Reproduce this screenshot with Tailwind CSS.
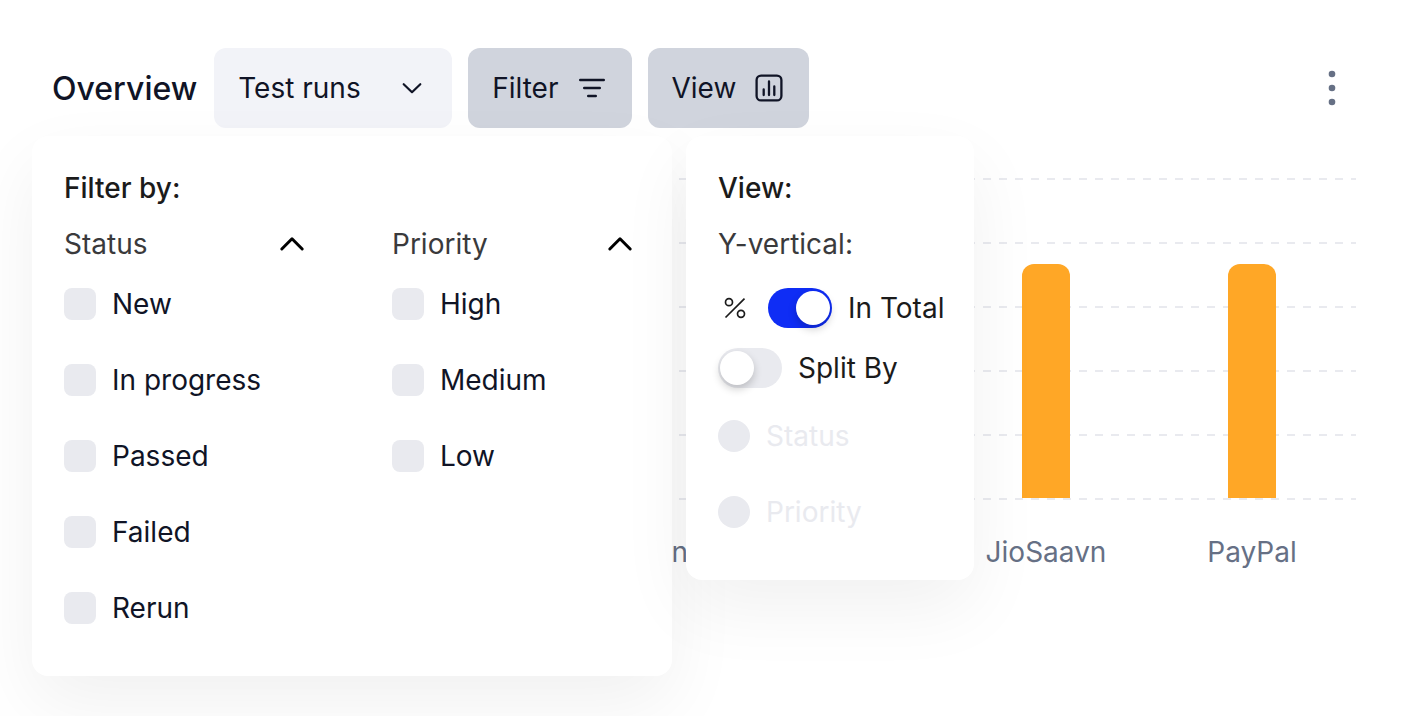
<!DOCTYPE html>
<html lang="en">
<head>
<meta charset="utf-8">
<meta name="viewport" content="width=device-width, initial-scale=1">
<title>Overview</title>
<script src="https://cdn.jsdelivr.net/npm/@tailwindcss/browser@4"></script>
</head>
<body class="min-h-screen overflow-x-hidden bg-white font-['Inter',sans-serif] text-[28px] leading-8 text-[#101426]">
<header class="flex items-center gap-4 pt-12 pl-[52px] pr-14">
  <h1 class="mr-px pt-0.5 text-[32px] leading-10 font-medium">Overview</h1>
  <div class="relative">
    <select aria-label="Metric" class="h-20 w-[238px] appearance-none rounded-xl bg-[#f2f3f8] pl-6 pr-16">
      <option>Test runs</option>
    </select>
    <svg class="pointer-events-none absolute right-6 top-6 size-8" viewBox="0 0 32 32" fill="none" stroke="#101426" stroke-width="2.2" stroke-linecap="round" stroke-linejoin="round" aria-hidden="true"><path d="M7.700 12.200l8.300 8 8.300-8"/></svg>
  </div>
  <button type="button" class="flex h-20 items-center gap-[17px] rounded-xl bg-[#d0d4dd] px-6">Filter
    <svg class="size-8" viewBox="0 0 32 32" fill="none" stroke="#101426" stroke-width="2.400" stroke-linecap="round" aria-hidden="true"><path d="M4.200 8h23.600M8.200 16h15.600M12.200 24h7.600"/></svg>
  </button>
  <button type="button" class="flex h-20 items-center gap-[17px] rounded-xl bg-[#d0d4dd] px-6">View
    <svg class="size-8" viewBox="0 0 32 32" fill="none" stroke="#101426" stroke-width="2.300" stroke-linecap="round" aria-hidden="true"><rect x="3.600" y="3.600" width="24.800" height="24.800" rx="4.500"/><path d="M10.700 17.500v5.500M16 9.500V23M21.300 14.500V23"/></svg>
  </button>
  <button type="button" aria-label="More options" class="ml-auto">
    <svg class="w-8 h-10" viewBox="0 0 32 40" fill="#667085" aria-hidden="true"><circle cx="16" cy="6" r="3.300"/><circle cx="16" cy="20" r="3.300"/><circle cx="16" cy="34" r="3.300"/></svg>
  </button>
</header>

<main class="relative pt-[50px]">
  <section aria-label="Test runs by project" class="pl-[119px] pr-12">
    <div class="grid">
      <div class="col-start-1 row-start-1 flex flex-col gap-[62px]" aria-hidden="true">
        <div class="h-0.5 bg-[repeating-linear-gradient(90deg,#e9eaef_0_8px,transparent_8px_16px)]"></div>
        <div class="h-0.5 bg-[repeating-linear-gradient(90deg,#e9eaef_0_8px,transparent_8px_16px)]"></div>
        <div class="h-0.5 bg-[repeating-linear-gradient(90deg,#e9eaef_0_8px,transparent_8px_16px)]"></div>
        <div class="h-0.5 bg-[repeating-linear-gradient(90deg,#e9eaef_0_8px,transparent_8px_16px)]"></div>
        <div class="h-0.5 bg-[repeating-linear-gradient(90deg,#e9eaef_0_8px,transparent_8px_16px)]"></div>
        <div class="h-0.5 bg-[repeating-linear-gradient(90deg,#e9eaef_0_8px,transparent_8px_16px)]"></div>
      </div>
      <div class="z-10 col-start-1 row-start-1 grid grid-cols-6 items-end justify-items-center pr-px pb-0.5">
        <div class="col-start-5 h-[234px] w-12 rounded-t-xl bg-[#ffa726]"></div>
        <div class="h-[234px] w-12 rounded-t-xl bg-[#ffa726]"></div>
      </div>
    </div>
    <div class="grid grid-cols-6 pt-9 pr-px text-center text-[#667085]">
      <span class="col-start-3">Amazon</span>
      <span class="col-start-5">JioSaavn</span>
      <span>PayPal</span>
    </div>
  </section>

  <!-- Open menus, floating over the chart -->
  <div class="absolute left-8 top-2 z-20 flex items-start gap-3.5">
    <form class="w-[640px] rounded-2xl bg-white pt-8 pb-[52px] pl-8 pr-9 shadow-[0_28px_72px_rgba(0,0,0,0.06)]">
      <h2 class="leading-10 font-medium text-[#1b1b1b]">Filter by:</h2>
      <div class="mt-4 grid grid-cols-2 items-start gap-x-[84px]">
        <div class="flex flex-col gap-11">
          <button type="button" aria-expanded="true" class="-mb-5 flex h-10 items-center justify-between text-[#3a3a3c]">Status
            <svg class="size-8" viewBox="0 0 32 32" fill="none" stroke="#000" stroke-width="3" stroke-linecap="round" stroke-linejoin="round" aria-hidden="true"><path d="M5.800 21L16 10.800 26.200 21"/></svg>
          </button>
          <label class="flex h-8 items-center gap-4"><input type="checkbox" class="size-8 appearance-none rounded-lg bg-[#e9eaef] checked:bg-[#0f2df5]">New</label>
          <label class="flex h-8 items-center gap-4"><input type="checkbox" class="size-8 appearance-none rounded-lg bg-[#e9eaef] checked:bg-[#0f2df5]">In progress</label>
          <label class="flex h-8 items-center gap-4"><input type="checkbox" class="size-8 appearance-none rounded-lg bg-[#e9eaef] checked:bg-[#0f2df5]">Passed</label>
          <label class="flex h-8 items-center gap-4"><input type="checkbox" class="size-8 appearance-none rounded-lg bg-[#e9eaef] checked:bg-[#0f2df5]">Failed</label>
          <label class="flex h-8 items-center gap-4"><input type="checkbox" class="size-8 appearance-none rounded-lg bg-[#e9eaef] checked:bg-[#0f2df5]">Rerun</label>
        </div>
        <div class="flex flex-col gap-11">
          <button type="button" aria-expanded="true" class="-mb-5 flex h-10 items-center justify-between text-[#3a3a3c]">Priority
            <svg class="size-8" viewBox="0 0 32 32" fill="none" stroke="#000" stroke-width="3" stroke-linecap="round" stroke-linejoin="round" aria-hidden="true"><path d="M5.800 21L16 10.800 26.200 21"/></svg>
          </button>
          <label class="flex h-8 items-center gap-4"><input type="checkbox" class="size-8 appearance-none rounded-lg bg-[#e9eaef] checked:bg-[#0f2df5]">High</label>
          <label class="flex h-8 items-center gap-4"><input type="checkbox" class="size-8 appearance-none rounded-lg bg-[#e9eaef] checked:bg-[#0f2df5]">Medium</label>
          <label class="flex h-8 items-center gap-4"><input type="checkbox" class="size-8 appearance-none rounded-lg bg-[#e9eaef] checked:bg-[#0f2df5]">Low</label>
        </div>
      </div>
    </form>

    <form class="w-72 rounded-2xl bg-white px-8 pt-8 pb-[52px] whitespace-nowrap text-[#1b1b1b] shadow-[0_28px_72px_rgba(0,0,0,0.06)]">
      <h2 class="leading-10 font-medium">View:</h2>
      <p class="mt-4 leading-10 text-[#3a3a3c]">Y-vertical:</p>
      <label class="mt-6 flex h-10 items-center gap-4">
        <svg class="w-[34px] h-8 shrink-0" viewBox="0 0 34 32" fill="none" stroke="#1b1b1b" stroke-width="1.700" role="img" aria-label="Percent"><circle cx="11" cy="10.200" r="3.500"/><circle cx="23" cy="21.800" r="3.500"/><path d="M7.500 25.500L26.500 6.600"/></svg>
        <input type="checkbox" role="switch" checked class="h-10 w-16 shrink-0 appearance-none rounded-full bg-[#e9eaef] p-[3px] before:block before:size-[34px] before:rounded-full before:bg-white before:shadow-[0_4px_8px_rgba(0,0,0,0.2)] checked:bg-[#0f2df5] checked:pl-7">In Total
      </label>
      <label class="mt-5 flex h-10 items-center gap-4">
        <input type="checkbox" role="switch" class="h-10 w-16 shrink-0 appearance-none rounded-full bg-[#e9eaef] py-[3px] pl-0.5 before:block before:size-[34px] before:rounded-full before:bg-white before:shadow-[0_4px_8px_rgba(0,0,0,0.2)] checked:bg-[#0f2df5] checked:pl-7">Split By
      </label>
      <div class="mt-8 flex flex-col gap-11 text-[#e9eaef]">
        <label class="flex h-8 items-center gap-4"><input type="radio" name="split" disabled class="size-8 appearance-none rounded-full bg-[#e9eaef]">Status</label>
        <label class="flex h-8 items-center gap-4"><input type="radio" name="split" disabled class="size-8 appearance-none rounded-full bg-[#e9eaef]">Priority</label>
      </div>
    </form>
  </div>
</main>
</body>
</html>
